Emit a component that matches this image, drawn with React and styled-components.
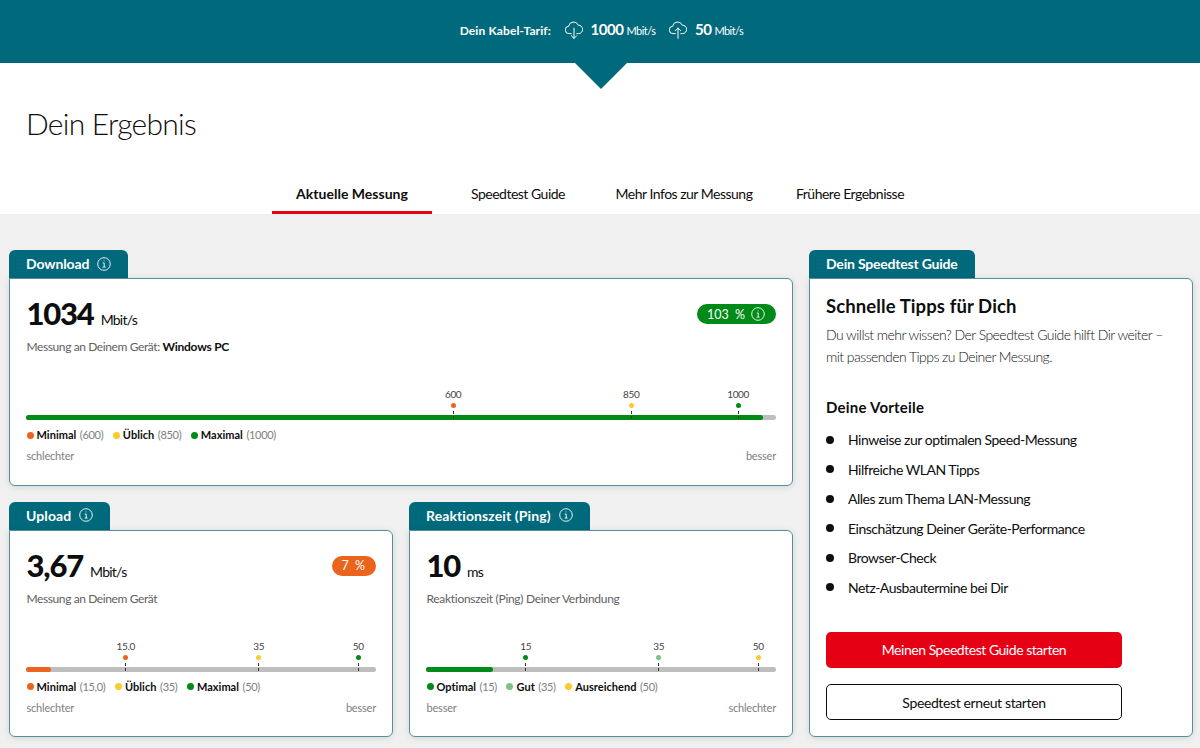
import React from "react";
import styled, { createGlobalStyle } from "styled-components";

const c = {
  teal: "#00697c",
  edge: "#4f929c",
  red: "#e60014",
  ink: "#0d0d0d",
  grey: "#7e7e7e",
  text: "#616161",
  track: "#bebebe",
  green: "#008a18",
  mint: "#7cc389",
  yellow: "#fbcb2e",
  orange: "#eb641e",
};

const GlobalStyle = createGlobalStyle`
  * { box-sizing: border-box; }
  body {
    margin: 0;
    background: #f0f0f0;
    color: ${c.ink};
    font-family: Lato, "Liberation Sans", sans-serif;
    font-size: 14px;
  }
  h1, h2, h3, p, ul { margin: 0; padding: 0; }
  button { font-family: inherit; }
`;

const Page = styled.div`
  width: 1200px;
  height: 748px;
  overflow: hidden;
`;

const TariffBar = styled.header`
  position: relative;
  height: 63px;
  padding: 0 0 3px 3px;
  display: flex;
  justify-content: center;
  align-items: center;
  background: ${c.teal};
  color: #fff;
  &::after {
    content: "";
    position: absolute;
    top: 62px;
    left: 574px;
    border: 27px solid transparent;
    border-top-color: ${c.teal};
    border-bottom: 0;
  }
`;

const TariffLabel = styled.span`
  font-size: 12px;
  font-weight: 700;
  margin-right: 14px;
  letter-spacing: 0.12px;
`;

const TariffSpeed = styled.span`
  display: flex;
  align-items: center;
  & + & { margin-left: 14px; }
  svg { margin-right: 7.5px; }
`;

const Speed = styled.span`
  display: flex;
  align-items: baseline;
  gap: 3px;
  font-size: 11px;
  line-height: 20px;
  letter-spacing: -0.55px;
  b { font-size: 15px; letter-spacing: -0.45px; }
`;

const Intro = styled.section`
  height: 151px;
  padding-top: 42px;
  background: #fff;
  display: flex;
  flex-direction: column;
  justify-content: space-between;
`;

const PageTitle = styled.h1`
  padding-left: 26px;
  font-size: 30px;
  line-height: 36px;
  font-weight: 300;
  letter-spacing: -0.75px;
`;

const Tabs = styled.nav`
  display: flex;
  height: 40px;
  padding-left: 272px;
`;

const Tab = styled.a`
  width: ${(p) => p.$width}px;
  display: flex;
  justify-content: center;
  line-height: 40px;
  font-weight: ${(p) => (p.$active ? 700 : 400)};
  letter-spacing: ${(p) => (p.$active ? 0.02 : -0.5)}px;
  border-bottom: 3px solid ${(p) => (p.$active ? c.red : "transparent")};
  border-radius: 2px 2px 0 0;
`;

const Board = styled.main`
  display: grid;
  grid-template-columns: repeat(3, 384px);
  grid-template-rows: repeat(2, 235.6px);
  gap: 16px;
  padding: 36px 0 0 9px;
`;

const Panel = styled.section`
  grid-column: ${(p) => p.$column};
  grid-row: ${(p) => p.$row};
  display: flex;
  flex-direction: column;
  align-items: flex-start;
`;

const PanelTab = styled.h2`
  display: flex;
  align-items: center;
  gap: 8px;
  height: 28px;
  padding: 0 17px 1px;
  background: ${c.teal};
  border-radius: 6px 6px 0 0;
  color: #fff;
  font-size: 14px;
  font-weight: 700;
  letter-spacing: ${(p) => p.$track || 0}px;
`;

const PanelBody = styled.div`
  flex: 1;
  width: 100%;
  padding: 18px 16px 0;
  background: #fff;
  border: 1px solid ${c.edge};
  border-radius: 0 6px 6px 6px;
  box-shadow: 0 1px 6px rgba(0, 0, 0, 0.12);
`;

const ValueRow = styled.div`
  display: flex;
  justify-content: space-between;
  align-items: center;
  height: 34px;
`;

const Value = styled.div`
  display: flex;
  align-items: baseline;
  gap: 7px;
  padding: 5px 0 0 0.5px;
  line-height: 34px;
  letter-spacing: -0.75px;
  b { font-size: 31px; font-weight: 900; letter-spacing: -1.2px; }
`;

const Badge = styled.span`
  display: flex;
  align-items: center;
  gap: 6px;
  height: 20px;
  padding: 0 11px 0 10px;
  border-radius: 10px;
  background: ${(p) => p.$color};
  color: #fff;
  font-size: 12.5px;
  word-spacing: 3px;
`;

const Caption = styled.p`
  margin-top: 8px;
  padding-left: 0.5px;
  font-size: 12px;
  line-height: 16px;
  color: ${c.text};
  letter-spacing: ${(p) => p.$track || -0.4}px;
  b { color: ${c.ink}; letter-spacing: -0.25px; }
`;

const Scale = styled.div`
  position: relative;
  height: 65px;
  padding-top: 60px;
`;

const Track = styled.div`
  height: 5px;
  border-radius: 3px;
  background: ${c.track};
`;

const Fill = styled.div`
  height: 5px;
  border-radius: 3px;
  background: ${(p) => p.$color};
`;

const Mark = styled.div`
  position: absolute;
  top: 32px;
  width: 40px;
  margin-left: -20px;
  display: flex;
  flex-direction: column;
  align-items: center;
  font-size: 10px;
  line-height: 14px;
  letter-spacing: -0.35px;
  color: #444;
  &::after {
    content: "";
    width: 1px;
    height: 8px;
    margin-top: 3px;
    background: repeating-linear-gradient(#333 0 3px, transparent 3px 5px);
  }
`;

const Dot = styled.i`
  flex: none;
  width: ${(p) => p.$size}px;
  height: ${(p) => p.$size}px;
  border-radius: 50%;
  background: ${(p) => p.$color};
`;

const MarkDot = styled(Dot)`
  margin-top: 2px;
`;

const Legend = styled.div`
  display: flex;
  gap: 9.5px;
  margin-top: 7px;
  padding-left: 0.5px;
  line-height: 16px;
  font-size: 11px;
`;

const LegendItem = styled.span`
  display: flex;
  align-items: center;
  gap: 3px;
  color: ${c.grey};
  letter-spacing: -0.3px;
  b { color: ${c.ink}; letter-spacing: 0.02px; margin-right: 0.5px; }
`;

const Ends = styled.div`
  display: flex;
  justify-content: space-between;
  margin-top: 5px;
  padding-left: 0.5px;
  font-size: 11px;
  line-height: 16px;
  letter-spacing: -0.2px;
  color: ${c.grey};
`;

const TipsTitle = styled.h3`
  font-size: 18.5px;
  line-height: 22px;
  margin-top: -2px;
  letter-spacing: 0.1px;
`;

const TipsText = styled.p`
  margin-top: 7px;
  font-size: 14px;
  font-weight: 300;
  line-height: 22px;
  letter-spacing: -0.54px;
  color: #111;
  white-space: nowrap;
`;

const BenefitsTitle = styled.h3`
  margin-top: 28px;
  font-size: 15px;
  line-height: 22px;
  letter-spacing: 0.22px;
`;

const Benefits = styled.ul`
  margin-top: 7px;
  list-style: none;
`;

const Benefit = styled.li`
  display: flex;
  align-items: center;
  gap: 14px;
  height: 29.5px;
  letter-spacing: -0.48px;
`;

const Button = styled.button`
  display: block;
  width: 296px;
  height: 36px;
  padding: 0;
  margin-top: ${(p) => (p.$primary ? 29.5 : 16.5)}px;
  border: ${(p) => (p.$primary ? 0 : 1.5)}px solid ${c.ink};
  border-radius: 5px;
  background: ${(p) => (p.$primary ? c.red : "#fff")};
  color: ${(p) => (p.$primary ? "#fff" : c.ink)};
  font-size: 14px;
  letter-spacing: ${(p) => (p.$primary ? -0.47 : -0.38)}px;
`;

const InfoIcon = () => (
  <svg width="14" height="14" viewBox="0 0 14 14" fill="none" stroke="#fff" strokeWidth="0.9">
    <circle cx="7" cy="7" r="6.3" />
    <path d="M5.8 6H7.2V10M5.6 10.1H8.6M6.6 3.9H7.5" />
  </svg>
);

const CloudIcon = ({ up }) => (
  <svg width="18" height="18" viewBox="0 0 18 18" fill="none" stroke="#fff" strokeWidth="1" strokeLinecap="round" strokeLinejoin="round">
    <path d="M6.3 12.6H4.2A3.7 3.7 0 0 1 3.7 5.2A5 5 0 0 1 13.3 4.2A4.2 4.2 0 0 1 13.6 12.6H11.8" />
    <path d={up ? "M9 17.3V7M6.3 9.7L9 7L11.7 9.7" : "M9 7.2V17.4M6.3 14.7L9 17.4L11.7 14.7"} />
  </svg>
);

const percent = (v) => `${v * 100}%`;

function Measurement({ column, row, title, track, value, unit, badge, caption, captionTrack, fill, fillColor, marks, ends }) {
  return (
    <Panel $column={column} $row={row}>
      <PanelTab $track={track}>{title}<InfoIcon /></PanelTab>
      <PanelBody>
        <ValueRow>
          <Value><b>{value}</b><span>{unit}</span></Value>
          {badge}
        </ValueRow>
        <Caption $track={captionTrack}>{caption}</Caption>
        <Scale>
          <Track><Fill $color={fillColor} style={{ width: percent(fill) }} /></Track>
          {marks.map((m) => (
            <Mark key={m.name} style={{ left: percent(m.at) }}>
              {m.label}
              <MarkDot $size={5} $color={m.color} />
            </Mark>
          ))}
        </Scale>
        <Legend>
          {marks.map((m) => (
            <LegendItem key={m.name}>
              <Dot $size={7} $color={m.color} />
              <b>{m.name}</b>
              <span>({m.legend || m.label})</span>
            </LegendItem>
          ))}
        </Legend>
        <Ends><span>{ends[0]}</span><span>{ends[1]}</span></Ends>
      </PanelBody>
    </Panel>
  );
}

const benefits = [
  "Hinweise zur optimalen Speed-Messung",
  "Hilfreiche WLAN Tipps",
  "Alles zum Thema LAN-Messung",
  "Einschätzung Deiner Geräte-Performance",
  "Browser-Check",
  "Netz-Ausbautermine bei Dir",
];

export default function App() {
  return (
    <Page>
      <GlobalStyle />
      <TariffBar>
        <TariffLabel>Dein Kabel-Tarif:</TariffLabel>
        <TariffSpeed><CloudIcon /><Speed><b>1000</b>Mbit/s</Speed></TariffSpeed>
        <TariffSpeed><CloudIcon up /><Speed><b>50</b>Mbit/s</Speed></TariffSpeed>
      </TariffBar>
      <Intro>
        <PageTitle>Dein Ergebnis</PageTitle>
        <Tabs>
          <Tab $width={160} $active>Aktuelle Messung</Tab>
          <Tab $width={172}>Speedtest Guide</Tab>
          <Tab $width={160}>Mehr Infos zur Messung</Tab>
          <Tab $width={172}>Frühere Ergebnisse</Tab>
        </Tabs>
      </Intro>
      <Board>
        <Measurement
          column="1 / 3" row="1" title="Download" track={-0.1} value="1034" unit="Mbit/s"
          badge={<Badge $color={c.green}>103 %<InfoIcon /></Badge>}
          caption={<>Messung an Deinem Gerät: <b>Windows PC</b></>}
          fill={0.982} fillColor={c.green} ends={["schlechter", "besser"]}
          marks={[
            { name: "Minimal", label: "600", at: 0.5695, color: c.orange },
            { name: "Üblich", label: "850", at: 0.807, color: c.yellow },
            { name: "Maximal", label: "1000", at: 0.9495, color: c.green },
          ]}
        />
        <Measurement
          column="1" row="2" title="Upload" track={0.1} value="3,67" unit="Mbit/s"
          badge={<Badge $color={c.orange}>7 %</Badge>}
          caption="Messung an Deinem Gerät"
          fill={0.07} fillColor={c.orange} ends={["schlechter", "besser"]}
          marks={[
            { name: "Minimal", label: "15.0", legend: "15,0", at: 0.285, color: c.orange },
            { name: "Üblich", label: "35", at: 0.665, color: c.yellow },
            { name: "Maximal", label: "50", at: 0.949, color: c.green },
          ]}
        />
        <Measurement
          column="2" row="2" title="Reaktionszeit (Ping)" track={0.1} value="10" unit="ms"
          caption="Reaktionszeit (Ping) Deiner Verbindung" captionTrack={-0.3}
          fill={0.19} fillColor={c.green} ends={["besser", "schlechter"]}
          marks={[
            { name: "Optimal", label: "15", at: 0.285, color: c.green },
            { name: "Gut", label: "35", at: 0.665, color: c.mint },
            { name: "Ausreichend", label: "50", at: 0.949, color: c.yellow },
          ]}
        />
        <Panel $column="3" $row="1 / 3">
          <PanelTab $track={-0.2}>Dein Speedtest Guide</PanelTab>
          <PanelBody>
            <TipsTitle>Schnelle Tipps für Dich</TipsTitle>
            <TipsText>
              Du willst mehr wissen? Der Speedtest Guide hilft Dir weiter –<br />
              mit passenden Tipps zu Deiner Messung.
            </TipsText>
            <BenefitsTitle>Deine Vorteile</BenefitsTitle>
            <Benefits>
              {benefits.map((b) => (
                <Benefit key={b}><Dot $size={8} $color={c.ink} />{b}</Benefit>
              ))}
            </Benefits>
            <Button $primary>Meinen Speedtest Guide starten</Button>
            <Button>Speedtest erneut starten</Button>
          </PanelBody>
        </Panel>
      </Board>
    </Page>
  );
}
